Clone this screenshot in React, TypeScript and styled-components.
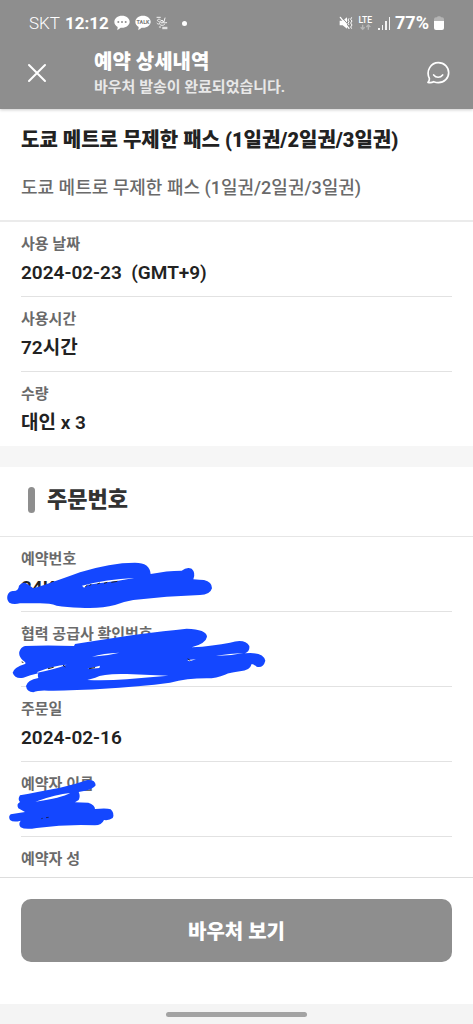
import type { ReactNode } from "react";
import styled, { createGlobalStyle } from "styled-components";

const GlobalStyle = createGlobalStyle`
  *, *::before, *::after { box-sizing: border-box; }
  body {
    margin: 0;
    background: #fff;
    color: #222;
    font-family: Roboto, "Noto Sans CJK KR", sans-serif;
  }
  h1, h2, p, dl, dt, dd { margin: 0; }
`;

const Page = styled.div`
  display: flex;
  flex-direction: column;
  min-height: 100vh;
`;

const TopBar = styled.header`
  background: #8e8e8e;
  color: #fff;
  box-shadow: 0 1px 3px rgba(0, 0, 0, 0.2);
`;

const StatusBar = styled.div`
  display: flex;
  align-items: center;
  justify-content: space-between;
  height: 36px;
  padding: 10px 29px 0;
  line-height: 24px;
`;

const StatusGroup = styled.div<{ $gap: number }>`
  display: flex;
  align-items: center;
  gap: ${(p) => p.$gap}px;
`;

const Carrier = styled.span`
  font-size: 17px;
  font-weight: 300;
`;

const StatusNumber = styled.span<{ $size: number }>`
  font-size: ${(p) => p.$size}px;
  font-weight: 700;
`;

const Dot = styled.span`
  width: 5px;
  height: 5px;
  margin-left: 9px;
  border-radius: 50%;
  background: #fff;
`;

const TitleBar = styled.div`
  display: flex;
  align-items: center;
  height: 73px;
  padding: 0 23px 0 25px;
`;

const IconButton = styled.button`
  display: flex;
  padding: 0;
  border: 0;
  background: none;
  color: inherit;
`;

const TitleText = styled.div`
  flex: 1;
  padding-left: 45px;
`;

const BarTitle = styled.h1`
  font-size: 20px;
  font-weight: 900;
  line-height: 28px;
`;

const BarSubtitle = styled.p`
  color: #e8e8e8;
  font-size: 15px;
  font-weight: 700;
  line-height: 22px;
`;

const Main = styled.main`
  flex: 1;
`;

const Product = styled.section`
  padding: 15px 21px 18px;
  border-bottom: 2px solid #ebebeb;
`;

const ProductName = styled.h2`
  font-size: 20px;
  font-weight: 900;
  line-height: 32px;
`;

const ProductOption = styled.p`
  margin-top: 18px;
  color: #6a6a6a;
  font-size: 18px;
  font-weight: 500;
  line-height: 28px;
`;

const Fields = styled.dl`
  padding: 0 21px;
`;

const FieldRow = styled.div`
  position: relative;
  padding-top: 10px;
  & + & { border-top: 1px solid #e2e2e2; }
`;

const Label = styled.dt`
  color: #6a6a6a;
  font-size: 15px;
  font-weight: 700;
  line-height: 24px;
`;

const Value = styled.dd`
  min-height: 40px;
  padding: 3px 0 9px;
  font-size: 19px;
  font-weight: 600;
  line-height: 28px;
  white-space: pre;
`;

const Scribble = styled.svg`
  position: absolute;
  z-index: 1;
  top: 0;
  left: -21px;
  fill: #1447ff;
  pointer-events: none;
`;

const Divider = styled.div`
  height: 21px;
  background: #f6f6f6;
`;

const SectionHead = styled.div`
  display: flex;
  align-items: center;
  gap: 12px;
  height: 70px;
  padding: 0 28px 4px;
  border-bottom: 1px solid #e6e6e6;
`;

const Marker = styled.span`
  width: 7px;
  height: 26px;
  border-radius: 4px;
  background: #8e8e8e;
`;

const SectionTitle = styled.h2`
  color: #333;
  font-size: 22px;
  font-weight: 900;
  line-height: 32px;
`;

const Footer = styled.footer`
  padding: 21px 21px 42px;
  border-top: 1px solid #ddd;
  background: #fff;
`;

const VoucherButton = styled.button`
  display: block;
  width: 100%;
  height: 63px;
  border: 0;
  border-radius: 10px;
  background: #8e8e8e;
  color: #fff;
  font-family: inherit;
  font-size: 20px;
  font-weight: 900;
`;

const GestureBar = styled.div`
  display: flex;
  align-items: center;
  justify-content: center;
  height: 20px;
  background: #f4f4f4;
`;

const Handle = styled.span`
  width: 30%;
  height: 5px;
  border-radius: 3px;
  background: #a3a3a3;
`;

const Bubble = ({ children }: { children: ReactNode }) => (
  <svg width="16" height="16" viewBox="0 0 48 48" fill="#fff">
    <path d="M24 2C11 2 1 10 1 20.500c0 7 4 12.500 10 15.500l-1 10 10-8c1 .2 3 .2 4 .2 13 0 23-8 23-18S37 2 24 2z" />
    {children}
  </svg>
);

const ChatStatus = () => (
  <Bubble>
    <g fill="#8e8e8e">
      <circle cx="13" cy="21" r="3" />
      <circle cx="24" cy="21" r="3" />
      <circle cx="35" cy="21" r="3" />
    </g>
  </Bubble>
);

const TalkStatus = () => (
  <Bubble>
    <text x="24" y="27" textAnchor="middle" fontFamily="Roboto, sans-serif" fontSize="16" fontWeight="700" fill="#777">
      TALK
    </text>
  </Bubble>
);

const SolStatus = () => (
  <svg width="12" height="14" viewBox="0 0 36 42" fill="none" stroke="#f2f2f2" strokeWidth="3" strokeLinecap="round">
    <path d="M3 4h10M13 11c-4-4-11 0-8 4 3 2 8 2 7 6-1 4-7 4-9 1M27 6l-4 15 9-1M12 26c4 3 9 3 13 0" />
    <path d="M10 33h4M20 34h13M20 38h13" />
    <circle cx="18" cy="17" r="4" />
  </svg>
);

const MutedStatus = () => (
  <svg width="14" height="14" viewBox="0 0 42 42" fill="#fff">
    <path d="M2 14h9L24 4v34L11 28H2z" />
    <path d="M7 2l27 31" stroke="#8e8e8e" strokeWidth="3" />
    <path d="M4 4l26 33" stroke="#fff" strokeWidth="4" strokeLinecap="round" />
    <path d="M30 7l-3 5 3 5-3 5 3 5M38 4l-3 6 4 5-4 6 4 6-4 6 3 5" fill="none" stroke="#fff" strokeWidth="3" />
  </svg>
);

const LteStatus = () => (
  <svg width="15" height="15" viewBox="0 0 45 45" fill="none">
    <text x="22" y="20" textAnchor="middle" fontFamily="Roboto, sans-serif" fontSize="26" fontWeight="500" fill="#fff">
      LTE
    </text>
    <path d="M14 26v14M8 34l6 6 6-6M31 41V27M25 33l6-6 6 6" stroke="#b8b8b8" strokeWidth="4" />
  </svg>
);

const SignalStatus = () => (
  <svg width="12" height="13" viewBox="0 0 12 13" fill="#f4f4f4">
    <path d="M0 11h2v2H0zM4 8h1v5H4zM7 4h2v9H7zM11 0h1v13h-1z" />
  </svg>
);

const BatteryStatus = () => (
  <svg width="10" height="14" viewBox="0 0 30 42">
    <path d="M9 4c0-4 12-4 12 0h3q6 0 6 6v5H0v-5q0-6 6-6z" fill="#b4b4b4" />
    <path d="M0 15h30v21q0 6-6 6H6q-6 0-6-6z" fill="#fff" />
  </svg>
);

const CloseIcon = () => (
  <svg width="24" height="24" viewBox="0 0 24 24" fill="none" stroke="currentColor" strokeWidth="2" strokeLinecap="round">
    <path d="M4 4l16 16M20 4L4 20" />
  </svg>
);

const SmileChatIcon = () => (
  <svg width="24" height="24" viewBox="0 0 72 72" fill="none" stroke="currentColor" strokeWidth="5" strokeLinecap="round" strokeLinejoin="round">
    <path d="M6 64q5-5 4-12C-1 29 15 5 37 5c18 0 31 14 31 30S55 65 37 65c-6 0-9-1-14-3q-7 4-17 2z" />
    <path d="M23 42c7 9 20 9 27 0" />
  </svg>
);

const BookingScribble = () => (
  <Scribble width="280" height="75" viewBox="0 -9 840 225">
    <path
      fillRule="evenodd"
      d="M38 153Q55 155 57 137Q68 122 82 132L100 145Q150 130 240 97Q330 68 405 68Q450 68 452 102Q500 92 545 92Q560 80 575 86Q588 98 580 118Q600 120 612 120Q636 125 636 145Q630 165 600 165Q500 168 400 180Q370 185 345 195Q300 207 240 203Q200 202 170 197Q150 190 120 190L60 190Q40 195 28 188Q20 180 22 168Q25 155 38 153ZM246 137L252 143L264 134L296 130L355 122L402 114Q320 118 246 137Z"
    />
    <path d="M256 140L262 136M268 138L274 132M292 132L300 129M312 130L322 127M334 127L352 124" stroke="#222" strokeWidth="3" />
  </Scribble>
);

const SupplierScribble = () => (
  <Scribble width="280" height="88" viewBox="0 216 840 264">
    <path d="M75 318Q140 315 222 318L225 312Q300 300 400 285Q500 272 560 266Q620 268 621 290Q618 310 575 322Q640 318 690 308Q735 295 748 318Q750 335 735 340Q790 335 796 362Q790 385 770 380Q760 372 755 372Q750 392 720 394Q690 398 675 404Q650 415 620 415Q560 415 510 428Q420 440 300 447Q200 452 145 452Q115 450 100 457Q80 455 78 438Q82 420 115 414Q112 405 115 400Q90 405 70 413Q45 418 38 398Q42 382 75 372Q80 368 70 362Q55 350 58 335Q62 322 75 318Z" />
    <g fill="#fff">
      <path d="M286 413Q310 400 380 402L505 407Q440 412 380 418Q320 422 262 420Z" />
      <path d="M276 350Q310 340 358 338Q320 348 276 350Z" />
      <path d="M648 347Q690 348 730 339Q690 341 648 347Z" />
      <path d="M112 396Q160 376 200 374Q170 386 112 398Z" />
      <path d="M262 387L300 377L298 384Z" />
      <path d="M562 360L588 358L568 364Z" />
    </g>
    <path
      d="M145 386L160 382M190 376L195 380M268 386L284 383M564 357L570 361M66 366L69 367"
      stroke="#222"
      strokeWidth="3"
      strokeLinecap="round"
    />
  </Scribble>
);

const NameScribble = () => (
  <Scribble width="240" height="75" viewBox="0 216 720 225">
    <path
      fillRule="evenodd"
      d="M60 316Q100 308 180 293Q220 285 262 270Q286 268 287 286Q280 300 236 306Q242 318 236 330L225 337L265 338Q285 345 285 357Q320 353 332 358Q345 370 338 384Q328 392 312 390Q305 406 285 406Q200 402 110 414Q75 420 62 412Q54 402 62 392Q40 398 30 390Q24 380 32 373L75 366L55 355Q48 342 60 336Q52 328 60 316ZM106 335Q170 312 210 309Q185 324 106 335Z"
    />
    <path d="M124 386L128 385M138 383L146 382" stroke="#16225e" strokeWidth="3" />
  </Scribble>
);

type FieldProps = { label: string; value?: string; cover?: ReactNode };

const Field = ({ label, value, cover }: FieldProps) => (
  <FieldRow>
    <Label>{label}</Label>
    {value !== undefined && <Value>{value}</Value>}
    {cover}
  </FieldRow>
);

export default function App() {
  return (
    <Page>
      <GlobalStyle />
      <TopBar>
        <StatusBar>
          <StatusGroup $gap={5}>
            <Carrier>SKT</Carrier>
            <StatusNumber $size={17}>12:12</StatusNumber>
            <ChatStatus />
            <TalkStatus />
            <SolStatus />
            <Dot />
          </StatusGroup>
          <StatusGroup $gap={5}>
            <MutedStatus />
            <LteStatus />
            <SignalStatus />
            <StatusNumber $size={18}>77%</StatusNumber>
            <BatteryStatus />
          </StatusGroup>
        </StatusBar>
        <TitleBar>
          <IconButton type="button" aria-label="닫기">
            <CloseIcon />
          </IconButton>
          <TitleText>
            <BarTitle>예약 상세내역</BarTitle>
            <BarSubtitle>바우처 발송이 완료되었습니다.</BarSubtitle>
          </TitleText>
          <IconButton type="button" aria-label="문의">
            <SmileChatIcon />
          </IconButton>
        </TitleBar>
      </TopBar>
      <Main>
        <Product>
          <ProductName>도쿄 메트로 무제한 패스 (1일권/2일권/3일권)</ProductName>
          <ProductOption>도쿄 메트로 무제한 패스 (1일권/2일권/3일권)</ProductOption>
        </Product>
        <Fields>
          <Field label="사용 날짜" value="2024-02-23  (GMT+9)" />
          <Field label="사용시간" value="72시간" />
          <Field label="수량" value="대인 x 3" />
        </Fields>
        <Divider />
        <SectionHead>
          <Marker />
          <SectionTitle>주문번호</SectionTitle>
        </SectionHead>
        <Fields>
          <Field label="예약번호" value="24K" cover={<BookingScribble />} />
          <Field label="협력 공급사 확인번호" value="" cover={<SupplierScribble />} />
          <Field label="주문일" value="2024-02-16" />
          <Field label="예약자 이름" value="" cover={<NameScribble />} />
          <Field label="예약자 성" />
        </Fields>
      </Main>
      <Footer>
        <VoucherButton type="button">바우처 보기</VoucherButton>
      </Footer>
      <GestureBar>
        <Handle />
      </GestureBar>
    </Page>
  );
}
